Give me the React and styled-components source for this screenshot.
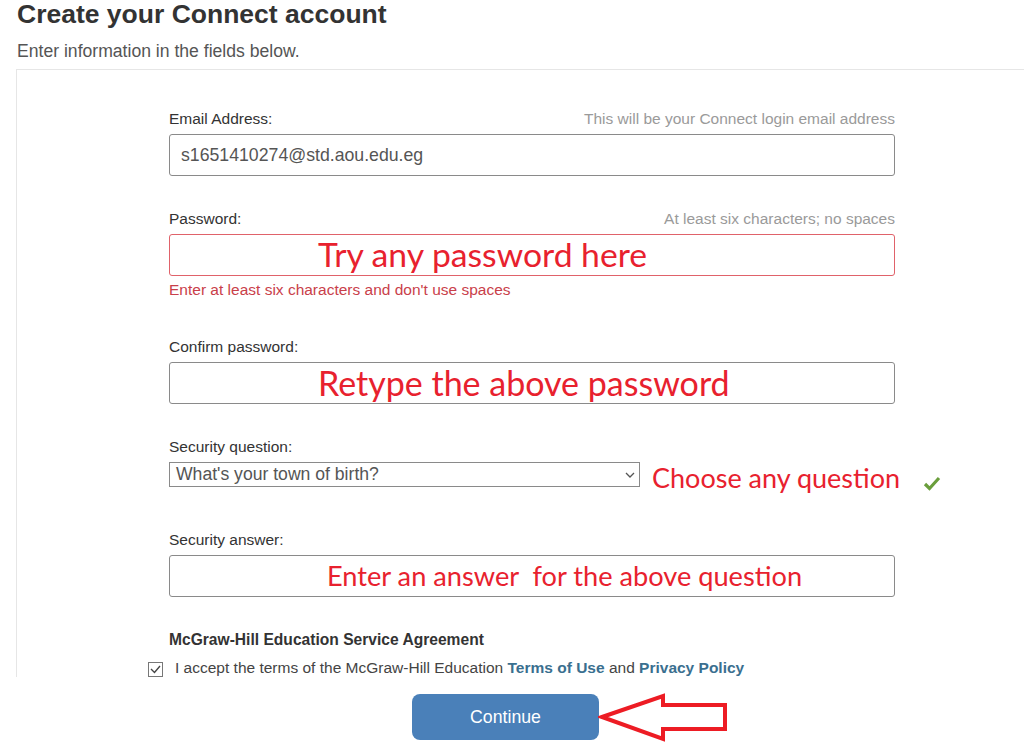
import React from "react";
import styled, { createGlobalStyle } from "styled-components";

const GlobalStyle = createGlobalStyle`
  html, body {
    margin: 0;
    padding: 0;
    background: #fff;
  }
  body {
    font-family: "Liberation Sans", Arial, sans-serif;
    color: #333;
  }
`;

const Page = styled.div`
  width: 1024px;
  height: 752px;
  overflow: hidden;
`;

const Title = styled.h1`
  margin: 0;
  padding: 0 0 0 17px;
  font-size: 26.5px;
  line-height: 28px;
  font-weight: bold;
  color: #333;
`;

const Subtitle = styled.p`
  margin: 13px 0 0;
  padding-left: 17px;
  font-size: 17.6px;
  line-height: 20px;
  color: #555;
`;

const Panel = styled.section`
  margin: 8px 0 0 16px;
  height: 608px;
  border-top: 1px solid #e6e6e6;
  border-left: 1px solid #e6e6e6;
  overflow: hidden;
  padding: 41px 0 0 152px;
  box-sizing: border-box;
`;

const Column = styled.div`
  width: 726px;
`;

const LabelRow = styled.div`
  display: flex;
  justify-content: space-between;
  align-items: baseline;
  margin-top: ${(p) => p.gap || 0}px;
  font-size: 15.5px;
  line-height: 16px;
  height: 16px;
`;

const Label = styled.span`
  color: #333;
`;

const Hint = styled.span`
  color: #9a9a9a;
`;

const Field = styled.div`
  margin-top: 7px;
  height: 42px;
  box-sizing: border-box;
  border: 1px solid ${(p) => (p.invalid ? "#e0626a" : "#8a8a8a")};
  border-radius: 3px;
  display: flex;
  align-items: center;
  padding-left: ${(p) => p.indent || 11}px;
  font-size: 17.7px;
  color: #555;
`;

const Note = styled.span`
  flex-shrink: 0;
  font-family: Lato, "Open Sans", sans-serif;
  color: #e8212e;
  font-size: ${(p) => p.size || 31}px;
  line-height: 1;
  white-space: pre;
  margin-top: ${(p) => p.drop || 0}px;
`;

const ErrorText = styled.div`
  margin-top: 6px;
  font-size: 15.5px;
  line-height: 16px;
  color: #c9404a;
`;

const SelectRow = styled.div`
  margin-top: 7px;
  height: 25px;
  display: flex;
  align-items: center;
`;

const Select = styled.div`
  flex-shrink: 0;
  width: 471px;
  height: 25px;
  box-sizing: border-box;
  border: 1px solid #8a8a8a;
  display: flex;
  align-items: center;
  justify-content: space-between;
  padding: 0 4px 0 6px;
  font-size: 17.6px;
  color: #555;
  margin-right: 12px;
`;

const Check = styled.svg`
  flex-shrink: 0;
  margin-left: 23px;
  margin-top: 16px;
`;

const Heading = styled.div`
  margin-top: 35px;
  font-size: 15.6px;
  line-height: 16px;
  font-weight: bold;
  color: #333;
`;

const AcceptRow = styled.label`
  margin: 11px 0 0 -21px;
  display: flex;
  align-items: center;
  gap: 12px;
  font-size: 15.5px;
  line-height: 18px;
  color: #444;
  white-space: nowrap;
`;

const Box = styled.span`
  width: 15px;
  height: 15px;
  border: 1px solid #777;
  box-sizing: border-box;
  display: flex;
  align-items: center;
  justify-content: center;
  margin-top: 3px;
`;

const Link = styled.a`
  color: #3a6f8f;
  font-weight: bold;
  text-decoration: none;
`;

const Footer = styled.div`
  margin-top: 14px;
  padding-left: 412px;
  display: flex;
  align-items: center;
`;

const Button = styled.button`
  width: 187px;
  height: 46px;
  border: none;
  border-radius: 8px;
  background: #4a80b9;
  color: #fff;
  font-family: "Liberation Sans", Arial, sans-serif;
  font-size: 17.7px;
`;

const Arrow = styled.svg`
  margin-left: -1px;
`;

export default function App() {
  return (
    <Page>
      <GlobalStyle />
      <Title>Create your Connect account</Title>
      <Subtitle>Enter information in the fields below.</Subtitle>
      <Panel>
        <Column>
          <LabelRow>
            <Label>Email Address:</Label>
            <Hint>This will be your Connect login email address</Hint>
          </LabelRow>
          <Field>s1651410274@std.aou.edu.eg</Field>

          <LabelRow gap={35}>
            <Label>Password:</Label>
            <Hint>At least six characters; no spaces</Hint>
          </LabelRow>
          <Field invalid indent={148}>
            <Note size={33.7}>Try any password here</Note>
          </Field>
          <ErrorText>Enter at least six characters and don't use spaces</ErrorText>

          <LabelRow gap={41}>
            <Label>Confirm password:</Label>
          </LabelRow>
          <Field indent={148}>
            <Note size={34}>Retype the above password</Note>
          </Field>

          <LabelRow gap={35}>
            <Label>Security question:</Label>
          </LabelRow>
          <SelectRow>
            <Select>
              <span>What's your town of birth?</span>
              <svg width="10" height="6" viewBox="0 0 10 6">
                <path d="M1 1l4 4 4-4" fill="none" stroke="#555" strokeWidth="1.3" />
              </svg>
            </Select>
            <Note size={27} drop={6}>Choose any question</Note>
            <Check width="18" height="16" viewBox="0 0 18 16">
              <path d="M2 9l4.5 4.5L16 3" fill="none" stroke="#6a9e3c" strokeWidth="3.2" />
            </Check>
          </SelectRow>

          <LabelRow gap={45}>
            <Label>Security answer:</Label>
          </LabelRow>
          <Field indent={157}>
            <Note size={27.2}>{"Enter an answer  for the above question"}</Note>
          </Field>

          <Heading>McGraw-Hill Education Service Agreement</Heading>
          <AcceptRow>
            <Box>
              <svg width="11" height="9" viewBox="0 0 11 9">
                <path d="M1 4l3.5 3.5L10 1" fill="none" stroke="#444" strokeWidth="1.4" />
              </svg>
            </Box>
            <span>
              I accept the terms of the McGraw-Hill Education <Link>Terms of Use</Link> and{" "}
              <Link>Privacy Policy</Link>
            </span>
          </AcceptRow>
        </Column>
      </Panel>
      <Footer>
        <Button>Continue</Button>
        <Arrow width="132" height="52" viewBox="0 0 132 52">
          <polygon
            points="4,26 65,5 65,14 127,14 127,38 65,38 65,48"
            fill="#fff"
            stroke="#ed1c24"
            strokeWidth="4"
            strokeLinejoin="miter"
          />
        </Arrow>
      </Footer>
    </Page>
  );
}
